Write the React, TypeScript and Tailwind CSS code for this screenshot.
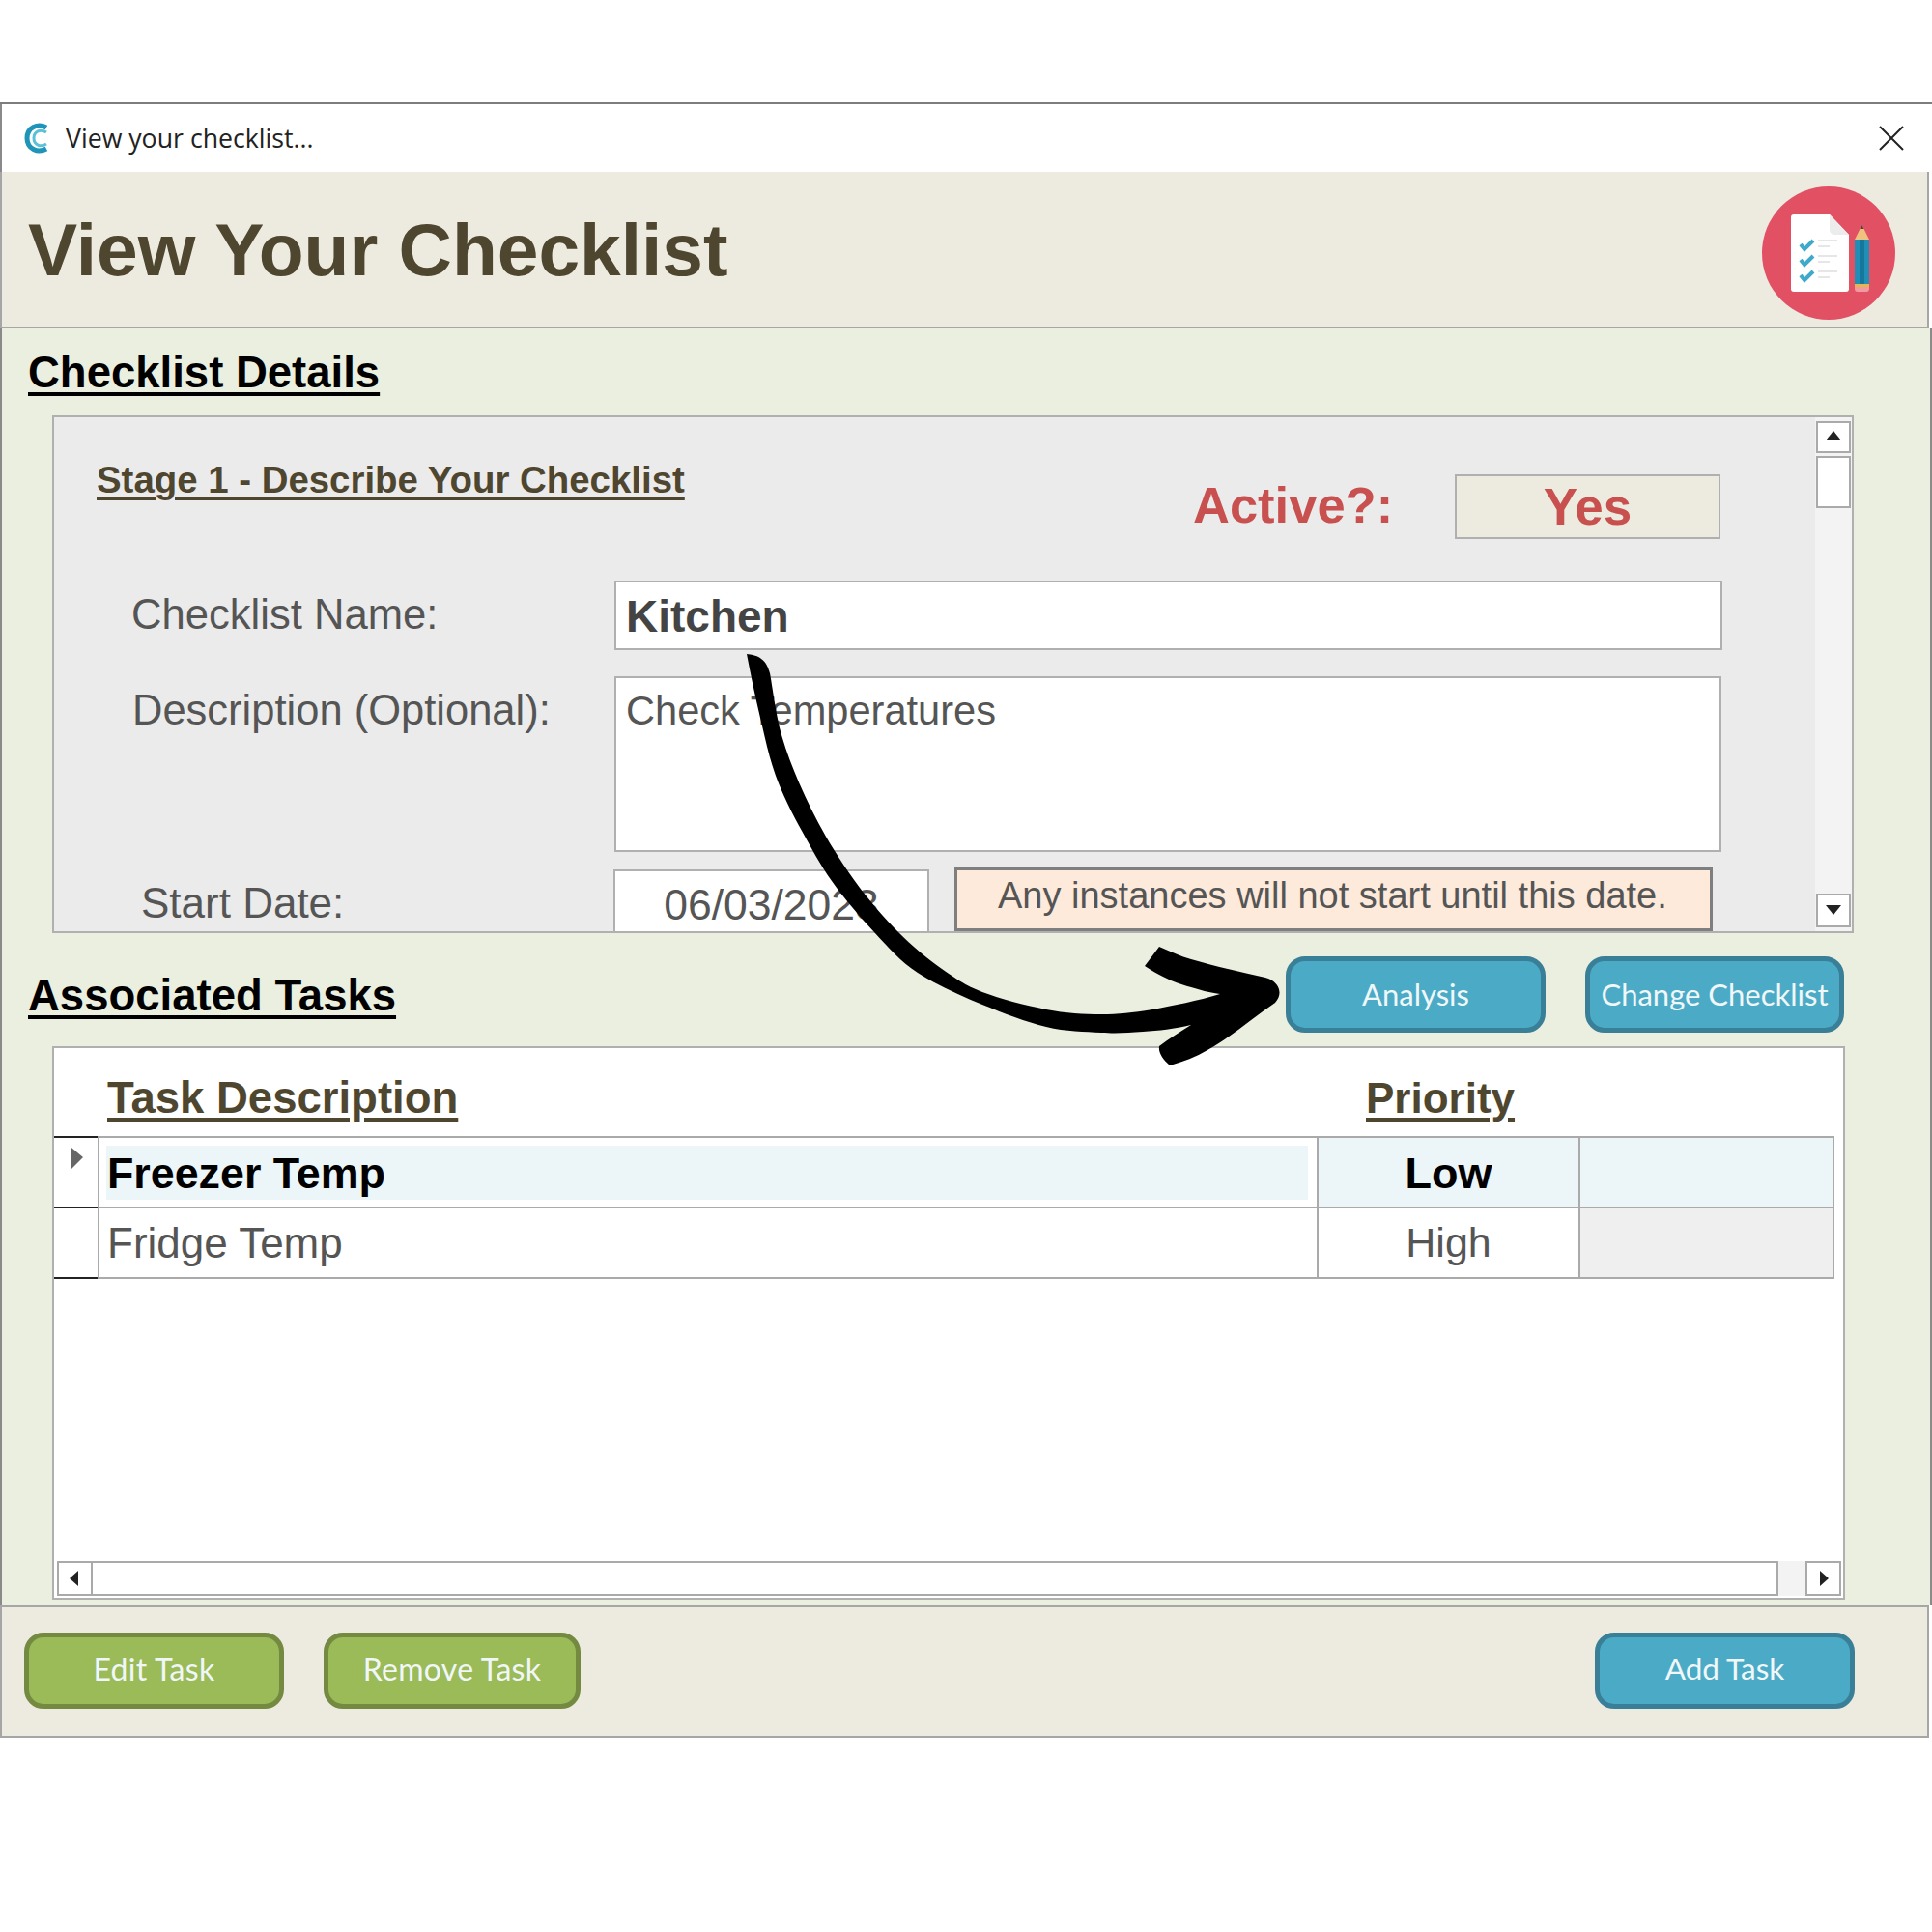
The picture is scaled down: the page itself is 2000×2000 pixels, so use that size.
const arial = "font-['Liberation_Sans',Arial,sans-serif]";

const ActionButton = ({ label, color, className }: { label: string; color: "blue" | "green"; className: string }) => (
  <button
    className={`h-[79px] rounded-[20px] border-[5px] flex items-center justify-center font-['Lato',sans-serif] text-[#f1f7f8] ${
      color === "blue" ? "bg-[#4babc6] border-[#3a7f98]" : "bg-[#9bbb59] border-[#738a40]"
    } ${className}`}
  >
    {label}
  </button>
);

const ScrollArrow = ({ dir }: { dir: "up" | "down" | "left" | "right" }) => {
  const points = {
    up: "1,12 9,2 17,12",
    down: "1,3 17,3 9,13",
    left: "12,1 12,17 3,9",
    right: "5,1 5,17 14,9",
  }[dir];
  return (
    <svg width="18" height="18" viewBox="0 0 18 18">
      <polygon points={points} fill="#222" />
    </svg>
  );
};

const ChecklistLogo = () => (
  <svg width="138" height="138" viewBox="0 0 138 138">
    <circle cx="69" cy="69" r="69" fill="#e25064" />
    <path d="M30 32 a3 3 0 0 1 3-3 H70 L90 50 V106 a3 3 0 0 1-3 3 H33 a3 3 0 0 1-3-3 Z" fill="#fff" />
    <path d="M70 29 L90 50 H75 a5 5 0 0 1-5-5 Z" fill="#ececec" />
    {[60, 76, 92].map((y) => (
      <g key={y}>
        <path d={`M40 ${y} l4 5 l9 -9`} fill="none" stroke="#3fa9c9" strokeWidth="4" />
        <rect x="58" y={y - 5} width="20" height="2" fill="#e6e6e6" />
        <rect x="58" y={y + 1} width="12" height="2" fill="#e6e6e6" />
      </g>
    ))}
    <path d="M96 55 L103.5 40 L111 55 Z" fill="#efc27f" />
    <path d="M101.5 44 L103.5 40 L105.5 44 Z" fill="#444" />
    <rect x="96" y="55" width="15" height="46" fill="#1f8fb8" />
    <rect x="101" y="55" width="5" height="46" fill="#17769c" />
    <rect x="96" y="101" width="15" height="3" fill="#e3b64e" />
    <path d="M96 104 H111 V106 a3 3 0 0 1-3 3 H99 a3 3 0 0 1-3-3 Z" fill="#f29a9f" />
  </svg>
);

const App = () => {
  return (
    <div className={`relative w-[2000px] h-[2000px] bg-white pt-[106px] overflow-hidden ${arial}`}>
      <div className="w-[2000px] border-t-2 border-[#7d7d7d]">
        {/* title bar */}
        <div className="h-[70px] flex items-center pl-[23px] pr-[29px] border-l-2 border-[#8a8a8a]">
          <svg width="26" height="32" viewBox="0 0 26 32">
            <path d="M23 5 C14 0 3 5 3 16 C3 27 14 32 23 27" fill="none" stroke="#1e94b8" strokeWidth="5" />
            <path d="M23 10 C17 6 10 9 10 16 C10 23 17 26 23 22" fill="none" stroke="#5cc0d8" strokeWidth="3" />
          </svg>
          <span className="ml-[17px] font-['Open_Sans',sans-serif] text-[26.7px] text-[#222]">
            View your checklist...
          </span>
          <svg className="ml-auto" width="26" height="26" viewBox="0 0 26 26">
            <path d="M1 1 L25 25 M25 1 L1 25" stroke="#222" strokeWidth="2" />
          </svg>
        </div>

        {/* header */}
        <div className="h-[162px] w-[1997px] bg-[#edebe0] border-l-2 border-r-2 border-b-2 border-[#a6a6a6] flex items-center justify-between pl-[27px] pr-[33px]">
          <h1 className="mt-[2px] text-[76.7px] font-bold text-[#4f4630] leading-none">View Your Checklist</h1>
          <div className="mt-[7px]">
            <ChecklistLogo />
          </div>
        </div>

        {/* body */}
        <div className="h-[1322px] bg-[#ebefdf] border-l-2 border-r-2 border-[#8a8a8a] pl-[27px]">
          <h2 className="h-[91px] pt-[20px] text-[45.5px] leading-[52px] font-bold text-black underline decoration-[4px] underline-offset-[5px]">
            Checklist Details
          </h2>

          <div className="w-[1865px] h-[536px] ml-[25px] -mt-[1px] border-2 border-[#b0b0b0] bg-[#ebebeb] flex overflow-hidden">
            <div className="flex-1">
              <div className="flex items-start pt-[41px]">
                <div className="w-[1179px] pl-[44px]">
                  <span className="text-[38.4px] leading-[48px] font-bold text-[#4f4630] underline decoration-[3px] underline-offset-[5px]">
                    Stage 1 - Describe Your Checklist
                  </span>
                </div>
                <span className="mt-[17px] w-[271px] text-[52.5px] leading-[66px] font-bold text-[#c8504f]">Active?:</span>
                <div className="mt-[18px] w-[275px] h-[67px] bg-[#edebe0] border-2 border-[#b0b0b0] flex items-center justify-center text-[53px] font-bold text-[#c8504f]">
                  Yes
                </div>
              </div>

              <div className="mt-[43px] flex items-center">
                <div className="w-[580px] pl-[80px] text-[43.6px] text-[#555]">Checklist Name:</div>
                <div className="w-[1147px] h-[72px] bg-white border-2 border-[#b0b0b0] pl-[10px] pt-[3px] flex items-center text-[46px] font-bold text-[#444]">
                  Kitchen
                </div>
              </div>

              <div className="mt-[27px] flex items-start">
                <div className="w-[580px] pl-[81px] pt-[3px] text-[43.5px] text-[#555]">Description (Optional):</div>
                <div className="w-[1146px] h-[182px] bg-white border-2 border-[#b0b0b0] pl-[10px] pt-[3px] text-[41.6px] text-[#555]">
                  Check Temperatures
                </div>
              </div>

              <div className="mt-[18px] flex items-start">
                <div className="w-[579px] pl-[90px] pt-[2px] text-[44px] text-[#555]">Start Date:</div>
                <div className="w-[327px] h-[90px] bg-white border-2 border-[#b0b0b0] pt-[2px] text-center text-[44.5px] text-[#555]">
                  06/03/2023
                </div>
                <div className="ml-[26px] -mt-[2px] w-[785px] h-[66px] bg-[#fdeadb] border-[3px] border-[#7f7f7f] pl-[42px] text-[38px] leading-[52px] text-[#555]">
                  Any instances will not start until this date.
                </div>
              </div>
            </div>

            <div className="w-[38px] bg-[#f3f3f3] flex flex-col items-center pt-[4px]">
              <div className="w-[36px] h-[33px] bg-white border-2 border-[#aaa] flex items-center justify-center">
                <ScrollArrow dir="up" />
              </div>
              <div className="w-[36px] h-[54px] mt-[3px] bg-white border-2 border-[#aaa]" />
              <div className="w-[36px] h-[35px] mt-auto mb-[4px] bg-white border-2 border-[#aaa] flex items-center justify-center">
                <ScrollArrow dir="down" />
              </div>
            </div>
          </div>

          <div className="h-[117px] w-[1880px] pt-[9px] flex items-center">
            <h2 className="mt-[4px] text-[45.5px] font-bold text-black underline decoration-[4px] underline-offset-[5px]">
              Associated Tasks
            </h2>
            <ActionButton label="Analysis" color="blue" className="ml-auto w-[269px] text-[31px]" />
            <ActionButton label="Change Checklist" color="blue" className="ml-[41px] w-[268px] text-[31px]" />
          </div>

          <div className="w-[1856px] h-[573px] ml-[25px] border-2 border-[#b0b0b0] bg-white flex flex-col">
            <div className="h-[91px] pt-[13px] flex items-center">
              <span className="w-[1306px] pl-[55px] text-[45.5px] font-bold text-[#4f4630] underline decoration-[4px] underline-offset-[5px]">
                Task Description
              </span>
              <span className="pl-[52px] text-[44px] font-bold text-[#4f4630] underline decoration-[4px] underline-offset-[5px]">
                Priority
              </span>
            </div>

            <div className="w-[1843px] grid grid-cols-[45px_1262px_271px_265px] border-t-2 border-[#aaa] h-[73px]">
              <div className="border-t-2 -mt-[2px] border-b-2 -mb-[2px] border-[#222] relative">
                <svg className="ml-[18px] mt-[9px]" width="12" height="24" viewBox="0 0 12 24">
                  <polygon points="0,1 12,11 0,23" fill="#666" />
                </svg>
              </div>
              <div className="border-l-2 border-[#aaa] pl-[7px] pr-[9px] pt-[8px]">
                <div className="h-[56px] bg-[#ecf5f8] pl-[1px] pt-[2px] flex items-center text-[44.8px] font-bold text-black">
                  Freezer Temp
                </div>
              </div>
              <div className="border-l-2 border-[#aaa] bg-[#ecf5f8] pt-[2px] flex items-center justify-center text-[45px] font-bold text-black">
                Low
              </div>
              <div className="border-l-2 border-r-2 border-[#aaa] bg-[#ecf5f8]" />
            </div>
            <div className="w-[1843px] grid grid-cols-[45px_1262px_271px_265px] border-t-2 border-b-2 border-[#aaa] h-[75px]">
              <div className="border-b-2 -mb-[2px] border-[#222]" />
              <div className="border-l-2 border-[#aaa] pl-[8px] flex items-center text-[44px] text-[#555]">Fridge Temp</div>
              <div className="border-l-2 border-[#aaa] flex items-center justify-center text-[43px] text-[#555]">High</div>
              <div className="border-l-2 border-r-2 border-[#aaa] bg-[#efefef]" />
            </div>

            <div className="mt-auto mb-[2px] h-[36px] pl-[3px] pr-[2px] flex">
              <div className="w-[37px] bg-white border-2 border-[#aaa] flex items-center justify-center">
                <ScrollArrow dir="left" />
              </div>
              <div className="w-[1745px] bg-white border-2 border-l-0 border-[#aaa]" />
              <div className="flex-1 bg-[#f3f3f3]" />
              <div className="w-[37px] bg-white border-2 border-[#aaa] flex items-center justify-center">
                <ScrollArrow dir="right" />
              </div>
            </div>
          </div>
        </div>

        {/* footer */}
        <div className="h-[137px] w-[1997px] bg-[#edebe0] border-t-2 border-l-2 border-r-2 border-b-2 border-[#a6a6a6] pb-[3px] flex items-center pl-[23px]">
          <ActionButton label="Edit Task" color="green" className="pb-[3px] w-[269px] text-[32px] tracking-[0.3px]" />
          <ActionButton label="Remove Task" color="green" className="pb-[3px] ml-[41px] w-[266px] text-[32px] tracking-[0.3px]" />
          <ActionButton label="Add Task" color="blue" className="pb-[3px] ml-[1050px] w-[269px] text-[31.5px]" />
        </div>
      </div>

      {/* annotation arrow drawn over the form */}
      <svg className="absolute left-0 top-0 pointer-events-none" width="2000" height="2000" viewBox="0 0 2000 2000">
        <path
          d="M773 677 C782 678 793 680 797 697 C799 707 803 738 808 757 C813 776 819.5 792 827 810 C835 828 844 847 855 866 C866 885 880.5 906.5 893 923 C906 939 916 951 930 965 C944 979 960.5 993 975 1003 C989.5 1013 999 1020 1017 1027 C1035 1034 1063 1041 1083 1045 C1103 1049 1122 1050 1140 1050 C1158 1050 1172 1048.5 1193 1045 C1214 1041 1240 1036 1263 1029 C1250 1027 1243 1025 1233 1022 C1218 1018 1205 1013 1185 1000 L1200 980 C1212 985 1222 990 1233 993 C1260 1001 1285 1006 1310 1012 C1322 1015 1330 1027 1320 1038 C1295 1055 1275 1073 1250 1087 C1238 1094 1225 1099 1211 1103 C1204 1097 1199 1090 1200 1083 C1210 1075 1222 1068 1233 1061 C1215 1065 1200 1067 1183 1068 C1167.5 1069 1157 1070 1140 1069 C1123 1068 1103.5 1068 1083 1063 C1062.5 1058 1039 1049 1017 1040 C995 1031 969 1019.5 950 1007 C931 994.5 920 981 905 965 C890 949 873.5 929.5 861 912 C848.5 894.5 840 878 830 860 C820 842 810 822.5 803 803 C796 783.5 792 764 787 743 C782 722 777 698 773 677 Z"
          fill="#000"
        />
      </svg>
    </div>
  );
};

export default App;
